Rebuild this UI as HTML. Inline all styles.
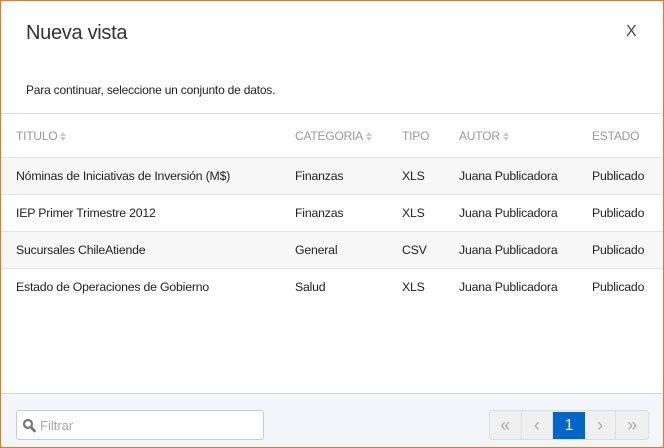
<!DOCTYPE html>
<html><head><meta charset="utf-8"><style>
*{margin:0;padding:0;box-sizing:border-box}
body{width:664px;height:448px;font-family:"Liberation Sans",sans-serif;background:#fff;overflow:hidden}
.frame{position:absolute;left:0;top:0;width:664px;height:448px;border:1px solid #e8791f;background:#fff}
.title{position:absolute;left:25px;top:21px;font-size:20px;color:#333;font-weight:300;letter-spacing:-0.3px}
.x{position:absolute;left:625px;top:22px;font-size:16px;color:#444}
.sub{position:absolute;left:25px;top:82px;font-size:12px;color:#222;letter-spacing:-0.2px}
.tbl{position:absolute;left:0;top:112px;width:662px;border-top:1px solid #ddd}
.row{position:relative;height:37px;border-bottom:1px solid #e4e4e4;font-size:12.3px;color:#222;letter-spacing:-0.2px}
.row.h{height:44px;color:#999;font-size:12px}
.row.g{background:#f7f7f7}
.row.l{border-bottom:none}
.row span{position:absolute;top:11px}
.row.h span{top:15px}
.s{display:inline-block;vertical-align:middle;width:7px;height:10px;position:relative;margin-left:3px}
.s:before,.s:after{content:"";position:absolute;left:0;border-left:3.5px solid transparent;border-right:3.5px solid transparent}
.s:before{top:0;border-bottom:4px solid #ccc}
.s:after{top:5px;border-top:4px solid #ccc}
.foot{position:absolute;left:0;top:392px;width:662px;height:54px;background:#f2f6fa;border-top:1px solid #d8d8d8}
.inp{position:absolute;left:15px;top:16px;width:248px;height:30px;background:#fff;border:1px solid #ccc;border-radius:3px;font-size:13px;color:#aaa}
.pg{position:absolute;left:488px;top:16px;width:160px;height:30px;border:1px solid #ddd;border-radius:3px;background:#f0f0f0;display:flex}
.pg div{width:32px;height:28px;border-right:1px solid #ddd;text-align:center;line-height:28px;color:#aaa;font-size:18px}
.pg div.a{background:#0066cc;color:#fff;font-size:16px;border:none;margin-top:1px;height:27px;line-height:27px}
</style></head><body><div class="frame">
<div class="title">Nueva vista</div>
<div class="x">X</div>
<div class="sub">Para continuar, seleccione un conjunto de datos.</div>
<div class="tbl">
<div class="row h"><span style="left:15px">TITULO<i class="s"></i></span><span style="left:294px">CATEGORIA<i class="s"></i></span><span style="left:401px">TIPO</span><span style="left:458px">AUTOR<i class="s"></i></span><span style="left:591px">ESTADO</span></div>
<div class="row g"><span style="left:15px">Nóminas de Iniciativas de Inversión (M$)</span><span style="left:294px">Finanzas</span><span style="left:401px">XLS</span><span style="left:458px">Juana Publicadora</span><span style="left:591px">Publicado</span></div>
<div class="row"><span style="left:15px">IEP Primer Trimestre 2012</span><span style="left:294px">Finanzas</span><span style="left:401px">XLS</span><span style="left:458px">Juana Publicadora</span><span style="left:591px">Publicado</span></div>
<div class="row g"><span style="left:15px">Sucursales ChileAtiende</span><span style="left:294px">General</span><span style="left:401px">CSV</span><span style="left:458px">Juana Publicadora</span><span style="left:591px">Publicado</span></div>
<div class="row l"><span style="left:15px">Estado de Operaciones de Gobierno</span><span style="left:294px">Salud</span><span style="left:401px">XLS</span><span style="left:458px">Juana Publicadora</span><span style="left:591px">Publicado</span></div>
</div>
<div class="foot">
<div class="inp"><svg style="position:absolute;left:5px;top:7px" width="14" height="15" viewBox="0 0 14 15"><circle cx="6" cy="6" r="4" fill="none" stroke="#777" stroke-width="2.2"/><path d="M9 9l3.5 4" stroke="#777" stroke-width="2.8" stroke-linecap="round"/></svg><span style="position:absolute;left:23px;top:7px">Filtrar</span></div>
<div class="pg"><div>&#171;</div><div>&#8249;</div><div class="a">1</div><div>&#8250;</div><div style="border:none">&#187;</div></div>
</div>
</div></body></html>
